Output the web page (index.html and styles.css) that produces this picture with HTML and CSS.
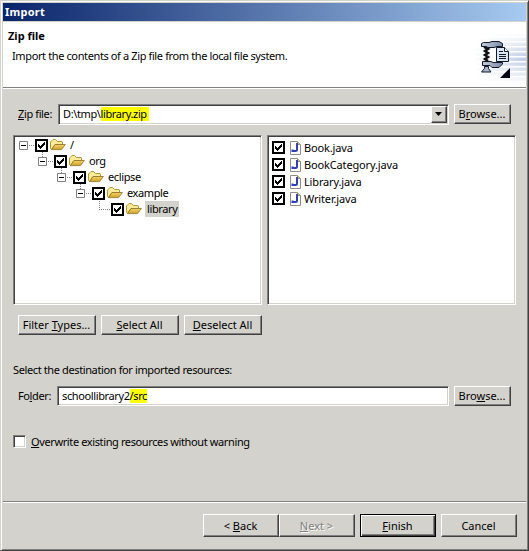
FILE: index.html
```html
<!DOCTYPE html>
<html lang="en">
<head>
<meta charset="utf-8">
<title>Import</title>
<link rel="stylesheet" href="styles.css">
</head>
<body>
<svg class="defs" width="0" height="0" aria-hidden="true">
  <defs>
    <linearGradient id="gold" x1="0" y1="0" x2="0" y2="1"><stop offset="0" stop-color="#f0d470"/><stop offset="1" stop-color="#d0a020"/></linearGradient>
    <linearGradient id="steel" x1="0" y1="0" x2="1" y2="0"><stop offset="0" stop-color="#c4cbdc"/><stop offset="1" stop-color="#7c8baa"/></linearGradient>
    <symbol id="check" viewBox="0 0 13 13">
      <path fill="#000" d="M0 0h13v13H0z"/><path fill="#fff" d="M2 2h9v9H2z"/>
      <path fill="#000" d="M3 5h1v3H3zM4 6h1v3H4zM5 7h1v3H5zM6 6h1v3H6zM7 5h1v3H7zM8 4h1v3H8zM9 3h1v3H9z"/>
    </symbol>
    <symbol id="minus" viewBox="0 0 9 9">
      <path fill="#fff" stroke="#808080" d="M.5.5h8v8h-8z"/><path stroke="#000" d="M2 4.5h5"/>
    </symbol>
    <symbol id="folder" viewBox="0 0 16 12">
      <path fill="#faeb98" stroke="#b09838" d="M.5 9.500V3L3 .5H5.500L7.500 2.500H12L12.500 3V5.500H5L1.500 10.500z"/>
      <path fill="url(#gold)" stroke="#907020" stroke-width=".8" d="M1.500 10.600L5 5.500H15.400L11.500 10.600z"/>
    </symbol>
    <symbol id="java" viewBox="0 0 12 14">
      <path fill="#fff" stroke="#8c8c88" d="M.5.5h7l3 3v10H.5z"/>
      <path fill="#e0c890" stroke="#a49464" d="M7.500.5v3h3"/>
      <path fill="none" stroke="#3040b8" stroke-width="2" d="M7 2v6.500Q7 10 5.500 10H2.500V8.500"/>
    </symbol>
  </defs>
</svg>
<main class="window">
  <div class="titlebar">Import</div>
  <header class="banner">
    <div class="heading">
      <h1>Zip file</h1>
      <p class="intro">Import the contents of a Zip file from the local file system.</p>
    </div>
    <svg class="art" width="52" height="54" viewBox="0 0 52 54">
      <defs><linearGradient id="fade"><stop offset="0" stop-color="#fff"/><stop offset="1" stop-color="#fff" stop-opacity="0"/></linearGradient>
      <linearGradient id="tint" x1="0" y1="0" x2="0" y2="1"><stop offset="0" stop-color="#fff"/><stop offset=".5" stop-color="#bccae4"/><stop offset="1" stop-color="#fff"/></linearGradient>
      <pattern id="rules" width="52" height="5" patternUnits="userSpaceOnUse"><path fill="#fff" d="M0 3h52v1.500H0z"/></pattern></defs>
      <path fill="url(#tint)" d="M0 0h52v52H0z"/><path fill="url(#fade)" d="M0 0h52v54H0z"/><path fill="url(#rules)" d="M0 0h52v54H0z"/>
      <path fill="url(#steel)" stroke="#101828" d="M7.500 10.500L9.500 9.500H15L18 8.500H25L28.500 10.500V13.500H23L20 14.500H14L12 13.500H7.500z"/>
      <path fill="#fff" d="M16 15h7v13h-7z"/>
      <path fill="url(#steel)" stroke="#101828" d="M8.500 28.500H17L19 29.500H28.500V31L25 34.500H18L16 32.500H8.500z"/>
      <path fill="none" stroke="#101010" stroke-width="2.500" d="M10 14l4 2-3 2 3 2-3 2 3 2-3 2 3 2"/>
      <path fill="#aab4ca" stroke="#101828" d="M10.500 33.500h4v2l2.500 3.500H7.500l3-3.500z"/>
      <path fill="#dbe5f5" stroke="#101828" d="M22.500 14.500h8l4 4v10h-12z"/><path fill="#fff" stroke="#101828" d="M30.500 14.500v4h4"/>
      <path stroke="#101828" d="M25 18.500h4M25 21.500h7M25 23.500h7M25 25.500h7"/>
      <path fill="#000010" d="M36 35v10H26z"/>
    </svg>
  </header>
  <section class="body">
    <div class="field source">
      <label><u>Z</u>ip file:</label>
      <div class="input combo"><span class="value">D:\tmp\<mark>library.zip&nbsp;</mark></span><span class="drop"><svg width="7" height="4"><path d="M0 0h7L3.500 4z"/></svg></span></div>
      <button class="browse">B<u>r</u>owse...</button>
    </div>
    <div class="panes">
      <div class="pane tree">
        <div class="node l0"><svg class="exp"><use href="#minus"/></svg><i class="dots"></i><svg class="chk"><use href="#check"/></svg><svg class="fold"><use href="#folder"/></svg><span>/</span></div>
        <div class="node l1"><svg class="exp"><use href="#minus"/></svg><i class="dots"></i><svg class="chk"><use href="#check"/></svg><svg class="fold"><use href="#folder"/></svg><span>org</span></div>
        <div class="node l2"><svg class="exp"><use href="#minus"/></svg><i class="dots"></i><svg class="chk"><use href="#check"/></svg><svg class="fold"><use href="#folder"/></svg><span>eclipse</span></div>
        <div class="node l3"><svg class="exp"><use href="#minus"/></svg><i class="dots"></i><svg class="chk"><use href="#check"/></svg><svg class="fold"><use href="#folder"/></svg><span>example</span></div>
        <div class="node l4"><i class="elbow"></i><svg class="chk"><use href="#check"/></svg><svg class="fold"><use href="#folder"/></svg><span class="selected">library</span></div>
      </div>
      <div class="pane files">
        <div class="file"><svg class="chk"><use href="#check"/></svg><svg class="java"><use href="#java"/></svg><span>Book.java</span></div>
        <div class="file"><svg class="chk"><use href="#check"/></svg><svg class="java"><use href="#java"/></svg><span>BookCategory.java</span></div>
        <div class="file"><svg class="chk"><use href="#check"/></svg><svg class="java"><use href="#java"/></svg><span>Library.java</span></div>
        <div class="file"><svg class="chk"><use href="#check"/></svg><svg class="java"><use href="#java"/></svg><span>Writer.java</span></div>
      </div>
    </div>
    <div class="tools">
      <button>Filter <u>T</u>ypes...</button><button><u>S</u>elect All</button><button><u>D</u>eselect All</button>
    </div>
    <p class="dest">Select the destination for imported resources:</p>
    <div class="field target">
      <label>Fo<u>l</u>der:</label>
      <div class="input"><span class="value">schoollibrary2<mark>/src</mark></span></div>
      <button class="browse">Bro<u>w</u>se...</button>
    </div>
    <label class="overwrite"><span class="box"></span><span class="caption"><u>O</u>verwrite existing resources without warning</span></label>
  </section>
  <footer class="actions">
    <button>&lt; <u>B</u>ack</button><button class="disabled"><u>N</u>ext &gt;</button><button class="default"><u>F</u>inish</button><button>Cancel</button>
  </footer>
</main>
</body>
</html>
```
FILE: styles.css
```css
* { box-sizing: border-box; }
body { margin: 0; font: 11px/13px "Noto Sans", "Open Sans", sans-serif; color: #000; letter-spacing: -.38px; }
h1, p { margin: 0; font-size: inherit; }
svg { display: block; flex: none; }
.defs { position: absolute; }
u { text-decoration: underline; text-decoration-thickness: 1px; text-underline-offset: 1px; text-decoration-skip-ink: none; }
mark { background: #ff0; color: #000; display: inline-block; height: 14px; }
.window {
  width: 529px; height: 551px; background: #d4d2cc;
  border: 1px solid #d4d2cc; border-right-color: #404040; border-bottom-color: #404040;
  box-shadow: inset 1px 1px #fff, inset -1px -1px #808080;
  padding: 2px; display: flex; flex-direction: column;
}
.titlebar {
  height: 18px; padding: 2px 2px 0; color: #fff; font-weight: 700; line-height: 14px;
  background: linear-gradient(90deg, #0a246a, #a6caf0); letter-spacing: .25px;
}
.banner {
  height: 66px; margin-top: 1px; background: #fff; border-bottom: 1px solid #808080;
  box-shadow: 0 1px #fff; display: flex; justify-content: space-between;
}
.heading { padding: 7px 0 0 5px; }
.heading h1 { line-height: 13px; letter-spacing: 0; }
.intro { padding: 7px 0 0 4px; white-space: nowrap; }
.art { margin-top: 11px; }
.body { flex: 1; padding: 16px 10px 0; }
.field { display: flex; height: 20px; }
.field label { white-space: nowrap; line-height: 20px; padding-left: 5px; }
.source label { width: 45px; }
.target label { width: 44px; }
.input {
  flex: none; width: 391px; height: 21px; background: #fff; display: flex;
  border: 1px solid; border-color: #808080 #fff #fff #808080;
  box-shadow: inset 1px 1px #404040, inset -1px -1px #d4d2cc;
  padding: 1px; justify-content: space-between;
}
.target .input { width: 392px; height: 20px; }
.value { padding: 1px 0 0 3px; line-height: 14px; white-space: nowrap; }
button, .drop {
  background: #d4d2cc; border: 1px solid; border-color: #fff #404040 #404040 #fff;
  box-shadow: inset -1px -1px #808080; color: #000; font: inherit; letter-spacing: 0;
  padding: 0 1px 1px 0; border-radius: 0; white-space: nowrap;
}
.drop { width: 16px; display: flex; align-items: center; justify-content: center; }
.browse { width: 57px; height: 20px; margin-left: 5px; flex: none; }
.panes { display: flex; gap: 5px; margin-top: 11px; }
.pane {
  width: 249px; height: 170px; background: #fff; border: 1px solid;
  border-color: #808080 #fff #fff #808080;
  box-shadow: inset 1px 1px #404040, inset -1px -1px #d4d2cc; padding: 1px;
}
.node { display: flex; height: 16px; align-items: center; position: relative; padding-left: 4px; }
.l1 { padding-left: 23px; }
.l2 { padding-left: 42px; }
.l3 { padding-left: 61px; }
.l4 { padding-left: 84px; }
.exp { width: 9px; height: 9px; }
.dots { width: 7px; height: 1px; background: repeating-linear-gradient(90deg, #fff 0 1px, #808080 1px 2px); }
.l1::before, .l2::before, .l3::before {
  content: ""; position: absolute; top: -1px; width: 1px; height: 5px; margin-left: 4px;
  background: repeating-linear-gradient(#808080 0 1px, #fff 1px 2px);
}
.elbow {
  width: 12px; height: 9px; align-self: flex-start;
  background: repeating-linear-gradient(90deg, #808080 0 1px, #fff 1px 2px) bottom / 100% 1px no-repeat,
    repeating-linear-gradient(#808080 0 1px, #fff 1px 2px) left / 1px 100% no-repeat;
}
.chk { width: 13px; height: 13px; }
.fold { width: 16px; height: 12px; margin-left: 2px; }
.node span { margin-left: 3px; padding: 1px 1px 2px; line-height: 13px; }
.node .selected { background: #d4d2cc; width: 34px; padding-left: 2px; }
.files { padding-top: 3px; }
.file { display: flex; height: 17px; align-items: center; padding-left: 3px; letter-spacing: -.15px; }
.java { width: 12px; height: 14px; margin-left: 5px; }
.file span { margin-left: 2px; }
.tools { display: flex; gap: 5px; padding: 10px 0 0 5px; }
.tools button { width: 78px; height: 20px; }
.dest { margin-top: 28px; line-height: 13px; }
.target { margin-top: 10px; }
.overwrite { display: flex; margin-top: 29px; align-items: flex-start; white-space: nowrap; }
.box {
  width: 13px; height: 13px; background: #fff; border: 1px solid;
  border-color: #808080 #fff #fff #808080; box-shadow: inset 1px 1px #404040, inset -1px -1px #d4d2cc;
}
.caption { margin-left: 5px; line-height: 14px; }
.actions {
  height: 47px; border-top: 1px solid #808080; box-shadow: inset 0 1px #fff;
  display: flex; padding: 12px 0 0 200px;
}
.actions button { width: 76px; height: 23px; }
.actions .disabled { color: #808080; text-shadow: 1px 1px #fff; }
.actions .default {
  margin: 0 5px; border-color: #000;
  box-shadow: inset 1px 1px #fff, inset -1px -1px #404040, inset -2px -2px #808080;
}
```
